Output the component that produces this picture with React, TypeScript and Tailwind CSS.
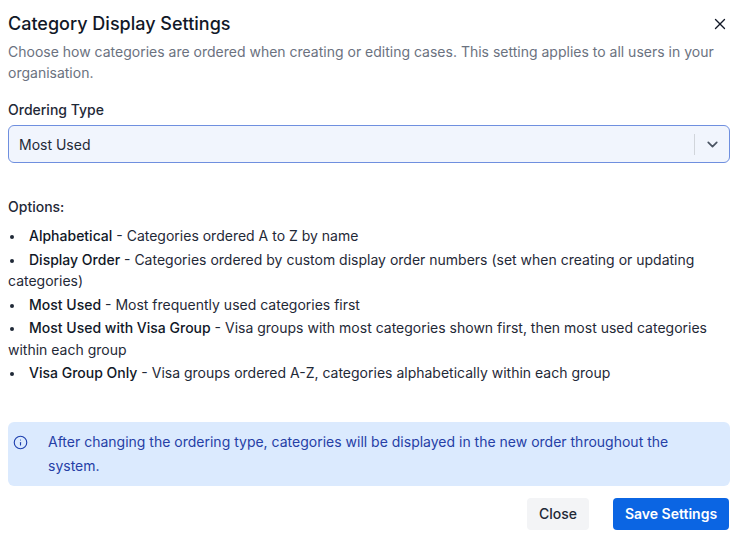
import React from 'react';
import { X, ChevronDown, Info } from 'lucide-react';

const options = [
  { name: 'Alphabetical', desc: 'Categories ordered A to Z by name' },
  { name: 'Display Order', desc: 'Categories ordered by custom display order numbers (set when creating or updating categories)' },
  { name: 'Most Used', desc: 'Most frequently used categories first' },
  { name: 'Most Used with Visa Group', desc: 'Visa groups with most categories shown first, then most used categories within each group' },
  { name: 'Visa Group Only', desc: 'Visa groups ordered A-Z, categories alphabetically within each group' },
];

const App: React.FC = () => {
  return (
    <div className="w-[738px] h-[534px] bg-white px-2 pt-[10px] font-['Inter',sans-serif] text-[#1f2937] overflow-hidden">
      {/* header */}
      <div className="flex items-center justify-between">
        <h2 className="text-[18px] leading-[28px] font-medium text-[#111827]">Category Display Settings</h2>
        <button className="mr-[1px] text-[#111827]" aria-label="Close">
          <X className="h-[18px] w-[18px]" strokeWidth={1.8} />
        </button>
      </div>
      <p className="mt-[3px] text-[14px] leading-[21px] text-[#6b7280]">
        Choose how categories are ordered when creating or editing cases. This setting applies to all users in your organisation.
      </p>

      {/* select */}
      <div className="mt-[17px]">
        <label className="block text-[14px] leading-[20px] font-medium text-[#1f2937]">Ordering Type</label>
        <div className="mt-[5px] flex h-[38px] items-center rounded-[6px] border border-[#6f8fdf] bg-[#f1f5fd] pl-[10px] pr-[8px]">
          <span className="flex-1 text-[14px] text-[#1f2937]">Most Used</span>
          <span className="mr-px h-[21px] w-px bg-[#d1d5db]" />
          <ChevronDown className="ml-[8px] h-[17px] w-[17px] text-[#4b5563]" strokeWidth={2.4} />
        </div>
      </div>

      {/* options */}
      <div className="mt-[33px] text-[14px] text-[#1f2937]">
        <p className="leading-[21px] font-medium">Options:</p>
        <ul className="mt-[8px] flex flex-col gap-[2px]">
          {options.map((o) => (
            <li key={o.name} className="leading-[21.5px]">
              <span className="ml-[2px] mr-[15px] inline-block h-[4px] w-[4px] rounded-full bg-[#1f2937] align-middle" />
              <span className="font-medium text-[#111827]">{o.name}</span> - {o.desc}
            </li>
          ))}
        </ul>
      </div>

      {/* info */}
      <div className="mt-[38px] flex rounded-[6px] bg-[#dbeafe] py-2 pl-[5px] pr-3">
        <Info className="mt-[5px] h-[15px] w-[15px] shrink-0 text-[#1e40af]" strokeWidth={1.8} />
        <p className="ml-[20px] text-[14px] leading-[24px] text-[#2640a6]">
          After changing the ordering type, categories will be displayed in the new order throughout the system.
        </p>
      </div>

      {/* footer */}
      <div className="mt-3 flex justify-end gap-6 pr-px">
        <button className="h-[32px] w-[62px] rounded-[4px] bg-[#f3f4f6] text-[14px] font-medium text-[#1f2937]">Close</button>
        <button className="h-[32px] w-[116px] rounded-[4px] bg-[#0b65e3] text-[14px] font-semibold text-white">Save Settings</button>
      </div>
    </div>
  );
};

export default App;
